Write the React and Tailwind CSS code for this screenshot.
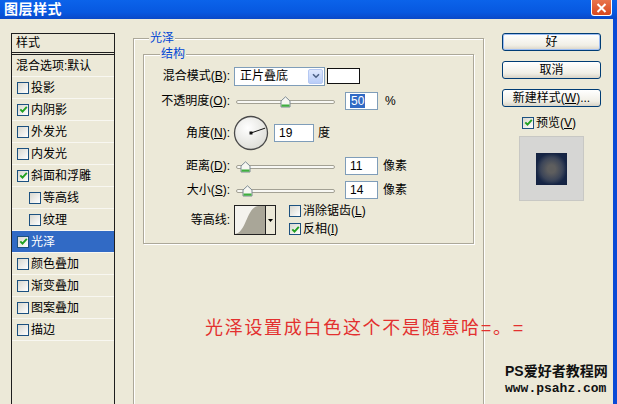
import React from 'react';

const Check = ({ on }) => (
  <span className="inline-flex h-[12px] w-[12px] shrink-0 items-center justify-center border border-[#1c5180] bg-[linear-gradient(135deg,#d8d7cf,#ffffff)]">
    {on && (
      <svg width="9" height="9" viewBox="0 0 9 9">
        <path d="M1.3 4.3 L3.5 6.6 L7.8 1.8" fill="none" stroke="#21a121" strokeWidth="1.9" />
      </svg>
    )}
  </span>
);

const layers = [
  { t: '投影' },
  { t: '内阴影', on: true },
  { t: '外发光' },
  { t: '内发光' },
  { t: '斜面和浮雕', on: true },
  { t: '等高线', sub: true },
  { t: '纹理', sub: true },
  { t: '光泽', on: true, sel: true },
  { t: '颜色叠加' },
  { t: '渐变叠加' },
  { t: '图案叠加' },
  { t: '描边' },
];

const Label = ({ children }) => (
  <span className="w-[86px] shrink-0 text-right">{children}</span>
);

const Thumb = ({ left }) => (
  <svg className={`absolute top-[1px] ${left}`} width="11" height="12" viewBox="0 0 11 12">
    <path d="M1 5 L5.5 0.8 L10 5 V11 H1 Z" fill="#f7f7f2" stroke="#7c8a93" strokeWidth="1" />
    <rect x="1.5" y="8.5" width="8" height="2.2" fill="#3fae3f" />
  </svg>
);

const Slider = ({ left }) => (
  <div className="relative ml-[6px] h-[13px] w-[99px]">
    <div className="mt-[5px] h-[4px] rounded-full border border-[#a3a194] bg-[#f8f8f4]" />
    <Thumb left={left} />
  </div>
);

const NumBox = ({ children, w = 'w-[33px]', ml = 'ml-[10px]' }) => (
  <div className={`${ml} ${w} flex h-[18px] items-center border border-[#7f9db9] bg-white pl-[4px]`}>
    {children}
  </div>
);

const Btn = ({ children, def, mt }) => (
  <div
    className={`${mt} flex h-[18px] w-[99px] items-center justify-center rounded-[3px] border border-[#003c74] bg-[linear-gradient(to_bottom,#ffffff,#f1efe6_70%,#d8d3c6)] text-[12px] leading-[14px] ${def ? 'shadow-[inset_0_0_0_1px_#9dbdf3]' : ''}`}
  >
    {children}
  </div>
);

export default function App() {
  return (
    <div className="flex h-[404px] w-[617px] flex-col overflow-hidden bg-[#ece9d8] font-['Liberation_Sans','Noto_Sans_CJK_SC',sans-serif] text-[12px] leading-[14px] text-black">
      {/* title bar */}
      <div className="flex h-[19px] shrink-0 items-start justify-between bg-[linear-gradient(to_bottom,#0b63ea,#0758e0_65%,#0a48c8)] pl-[4px] pr-[5px]">
        <span className="mt-[1px] text-[14px] font-bold leading-[16px] tracking-[0.5px] text-white">图层样式</span>
        <span className="flex h-[16px] w-[21px] items-center justify-center rounded-b-[3px] border border-t-0 border-white bg-[linear-gradient(to_bottom,#e8744c,#d9481e)]">
          <svg width="11" height="10" viewBox="0 0 11 10">
            <path d="M1.5 1 L9.5 9 M9.5 1 L1.5 9" stroke="#fff" strokeWidth="2" />
          </svg>
        </span>
      </div>

      <div className="flex min-h-0 flex-1">
        <div className="flex flex-1 items-start">
          {/* styles list */}
          <div className="ml-[11px] mt-[14px] h-[400px] w-[104px] shrink-0 border border-[#1e1e1e]">
            <div className="flex h-[21px] items-center border-b-[3px] border-double border-[#1e1e1e] pl-[4px]">样式</div>
            <div className="flex h-[22px] items-center border-b border-[#f8f7f1] pl-[4px]">混合选项:默认</div>
            {layers.map((l) => (
              <div
                key={l.t}
                className={`flex h-[22px] items-center gap-[2px] border-b border-[#f8f7f1] ${l.sub ? 'pl-[17px]' : 'pl-[5px]'} ${l.sel ? 'bg-[#316ac5] text-white' : ''}`}
              >
                <Check on={l.on} />
                <span>{l.t}</span>
              </div>
            ))}
          </div>

          {/* main group */}
          <fieldset className="ml-[18px] mt-[12px] h-[392px] w-[351px] min-w-0 shrink-0 border border-[#aca899] px-[9px] pt-[2px] shadow-[inset_1px_1px_0_#fff,1px_1px_0_#fff]">
            <legend className="ml-[6px] bg-[#ece9d8] px-[1px] text-[#0046d5]">光泽</legend>

            <fieldset className="min-w-0 border border-[#aca899] pb-[8px] shadow-[inset_1px_1px_0_#fff,1px_1px_0_#fff]">
              <legend className="ml-[16px] bg-[#ece9d8] px-[1px] text-[#0046d5]">结构</legend>

              <div className="mt-[5px] flex h-[20px] items-center">
                <Label>
                  混合模式(<u>B</u>):
                </Label>
                <div className="ml-[4px] flex h-[19px] w-[91px] items-center justify-between border border-[#7f9db9] bg-white pl-[5px] pr-[1px]">
                  <span>正片叠底</span>
                  <span className="flex h-[15px] w-[15px] items-center justify-center rounded-[2px] border border-[#b5c8f2] bg-[linear-gradient(to_bottom,#dfe8fd,#b9cdf8)]">
                    <svg width="8" height="6" viewBox="0 0 8 6">
                      <path d="M1 1.2 L4 4.2 L7 1.2" fill="none" stroke="#4d6185" strokeWidth="1.6" />
                    </svg>
                  </span>
                </div>
                <div className="ml-[2px] h-[16px] w-[33px] border border-[#111] bg-white" />
              </div>

              <div className="mt-[5px] flex h-[20px] items-center">
                <Label>
                  不透明度(<u>O</u>):
                </Label>
                <Slider left="left-[44px]" />
                <NumBox>
                  <span className="bg-[#316ac5] px-[1px] text-white">50</span>
                </NumBox>
                <span className="ml-[7px]">%</span>
              </div>

              <div className="mt-[4px] flex h-[35px] items-center">
                <Label>
                  角度(<u>N</u>):
                </Label>
                <svg className="ml-[3px]" width="36" height="36" viewBox="0 0 36 36">
                  <defs>
                    <radialGradient id="dial" cx="40%" cy="35%" r="70%">
                      <stop offset="0%" stopColor="#ffffff" />
                      <stop offset="100%" stopColor="#dcdcd6" />
                    </radialGradient>
                  </defs>
                  <circle cx="18" cy="18" r="16.5" fill="url(#dial)" stroke="#4a4a4a" strokeWidth="1.3" />
                  <line x1="18" y1="18" x2="32.2" y2="13.1" stroke="#111" strokeWidth="1" />
                  <rect x="16.5" y="16.5" width="3" height="3" fill="#111" />
                </svg>
                <NumBox w="w-[40px]" ml="ml-[5px]">19</NumBox>
                <span className="ml-[4px]">度</span>
              </div>

              <div className="mt-[6px] flex h-[20px] items-center">
                <Label>
                  距离(<u>D</u>):
                </Label>
                <Slider left="left-[4px]" />
                <NumBox>11</NumBox>
                <span className="ml-[5px]">像素</span>
              </div>

              <div className="mt-[4px] flex h-[20px] items-center">
                <Label>
                  大小(<u>S</u>):
                </Label>
                <Slider left="left-[6px]" />
                <NumBox>14</NumBox>
                <span className="ml-[5px]">像素</span>
              </div>

              <div className="mt-[5px] flex h-[30px] items-center">
                <Label>等高线:</Label>
                <div className="ml-[4px] flex h-[30px] w-[42px] border border-[#222] bg-white">
                  <svg width="30" height="28" viewBox="0 0 30 28">
                    <rect x="0" y="0" width="30" height="28" fill="#f4f3ee" />
                    <path d="M0 28 C11 27 12 1 23 0 L30 0 L30 28 Z" fill="#a9a698" />
                  </svg>
                  <div className="flex flex-1 items-center justify-center border-l border-[#222] bg-[#ece9d8]">
                    <svg width="5" height="3" viewBox="0 0 5 3">
                      <path d="M0 0 H5 L2.5 3 Z" fill="#000" />
                    </svg>
                  </div>
                </div>
                <div className="ml-[13px] flex flex-col gap-[4px]">
                  <div className="flex items-center gap-[2px]">
                    <Check />
                    <span>
                      消除锯齿(<u>L</u>)
                    </span>
                  </div>
                  <div className="flex items-center gap-[2px]">
                    <Check on />
                    <span>
                      反相(<u>I</u>)
                    </span>
                  </div>
                </div>
              </div>
            </fieldset>

            <p className="ml-[62px] mt-[74px] whitespace-nowrap text-[18px] leading-[20px] tracking-[1.7px] text-[#e3302f]">
              光泽设置成白色这个不是随意哈=。=
            </p>
          </fieldset>

          {/* right column */}
          <div className="ml-[18px] mt-[14px] flex w-[111px] shrink-0 flex-col items-start">
            <Btn def mt="">好</Btn>
            <Btn mt="mt-[10px]">取消</Btn>
            <Btn mt="mt-[10px]">
              新建样式(<u>W</u>)...
            </Btn>
            <div className="ml-[20px] mt-[9px] flex h-[13px] items-center gap-[2px]">
              <Check on />
              <span>
                预览(<u>V</u>)
              </span>
            </div>
            <div className="ml-[17px] mt-[7px] flex h-[65px] w-[65px] items-center justify-center border border-[#c8c8c4] bg-[#d6d6d4]">
              <div className="h-[32px] w-[31px] bg-[radial-gradient(closest-side,#5e5e5e_25%,#3c4558_70%,#172646_100%)] shadow-[inset_0_0_3px_#14203c]" />
            </div>
            <div className="ml-[3px] mt-[161px] flex flex-col items-start text-[#111]">
              <span className="text-[14px] font-bold leading-[18px]">PS爱好者教程网</span>
              <span className="mt-[2px] font-['Liberation_Mono',monospace] text-[13px] font-bold leading-[14px]">www.psahz.com</span>
            </div>
          </div>
        </div>
        <div className="w-[4px] shrink-0 bg-[#0a4ad6]" />
      </div>
    </div>
  );
}
